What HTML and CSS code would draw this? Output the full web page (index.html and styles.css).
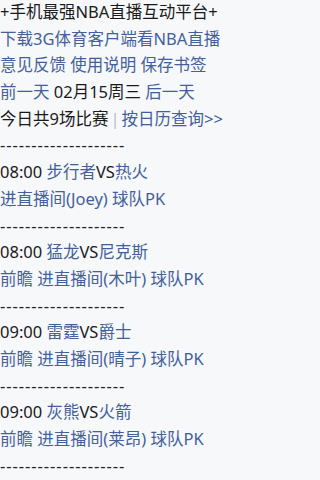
FILE: index.html
```html
<!DOCTYPE html>
<html lang="zh">
<head>
<meta charset="utf-8">
<title>NBA直播</title>
<link rel="stylesheet" href="styles.css">
</head>
<body>
<div class="page">
  <div class="line">+手机最强NBA直播互动平台+</div>
  <div class="line"><a href="#">下载3G体育客户端看NBA直播</a></div>
  <div class="line"><a href="#">意见反馈</a> <a href="#">使用说明</a> <a href="#">保存书签</a></div>
  <div class="line"><a href="#">前一天</a> 02月15周三 <a href="#">后一天</a></div>
  <div class="line">今日共9场比赛<span class="sep">|</span><a href="#">按日历查询&gt;&gt;</a></div>
  <div class="line dash">--------------------</div>
  <div class="line">08:00 <a href="#">步行者</a>VS<a href="#">热火</a></div>
  <div class="line"><a href="#">进直播间(Joey)</a> <a href="#">球队PK</a></div>
  <div class="line dash">--------------------</div>
  <div class="line">08:00 <a href="#">猛龙</a>VS<a href="#">尼克斯</a></div>
  <div class="line"><a href="#">前瞻</a> <a href="#">进直播间(木叶)</a> <a href="#">球队PK</a></div>
  <div class="line dash">--------------------</div>
  <div class="line">09:00 <a href="#">雷霆</a>VS<a href="#">爵士</a></div>
  <div class="line"><a href="#">前瞻</a> <a href="#">进直播间(晴子)</a> <a href="#">球队PK</a></div>
  <div class="line dash">--------------------</div>
  <div class="line">09:00 <a href="#">灰熊</a>VS<a href="#">火箭</a></div>
  <div class="line"><a href="#">前瞻</a> <a href="#">进直播间(莱昂)</a> <a href="#">球队PK</a></div>
  <div class="line dash">--------------------</div>
</div>
</body>
</html>
```

FILE: styles.css
```css
html, body {
  margin: 0;
  padding: 0;
  background: #f7f8fa;
}
.page {
  margin-top: -1px;
  font-family: "Noto Sans", "Noto Sans CJK SC", sans-serif;
  font-size: 16.5px;
  line-height: 26.7px;
  color: #1a1a1a;
  white-space: nowrap;
}
.line {
  height: 26.7px;
}
.page a {
  color: #43609c;
  text-decoration: none;
}
.sep {
  color: #b8bcc4;
  margin: 0 2px;
}
.dash {
  color: #222;
  letter-spacing: 0.95px;
}
```
